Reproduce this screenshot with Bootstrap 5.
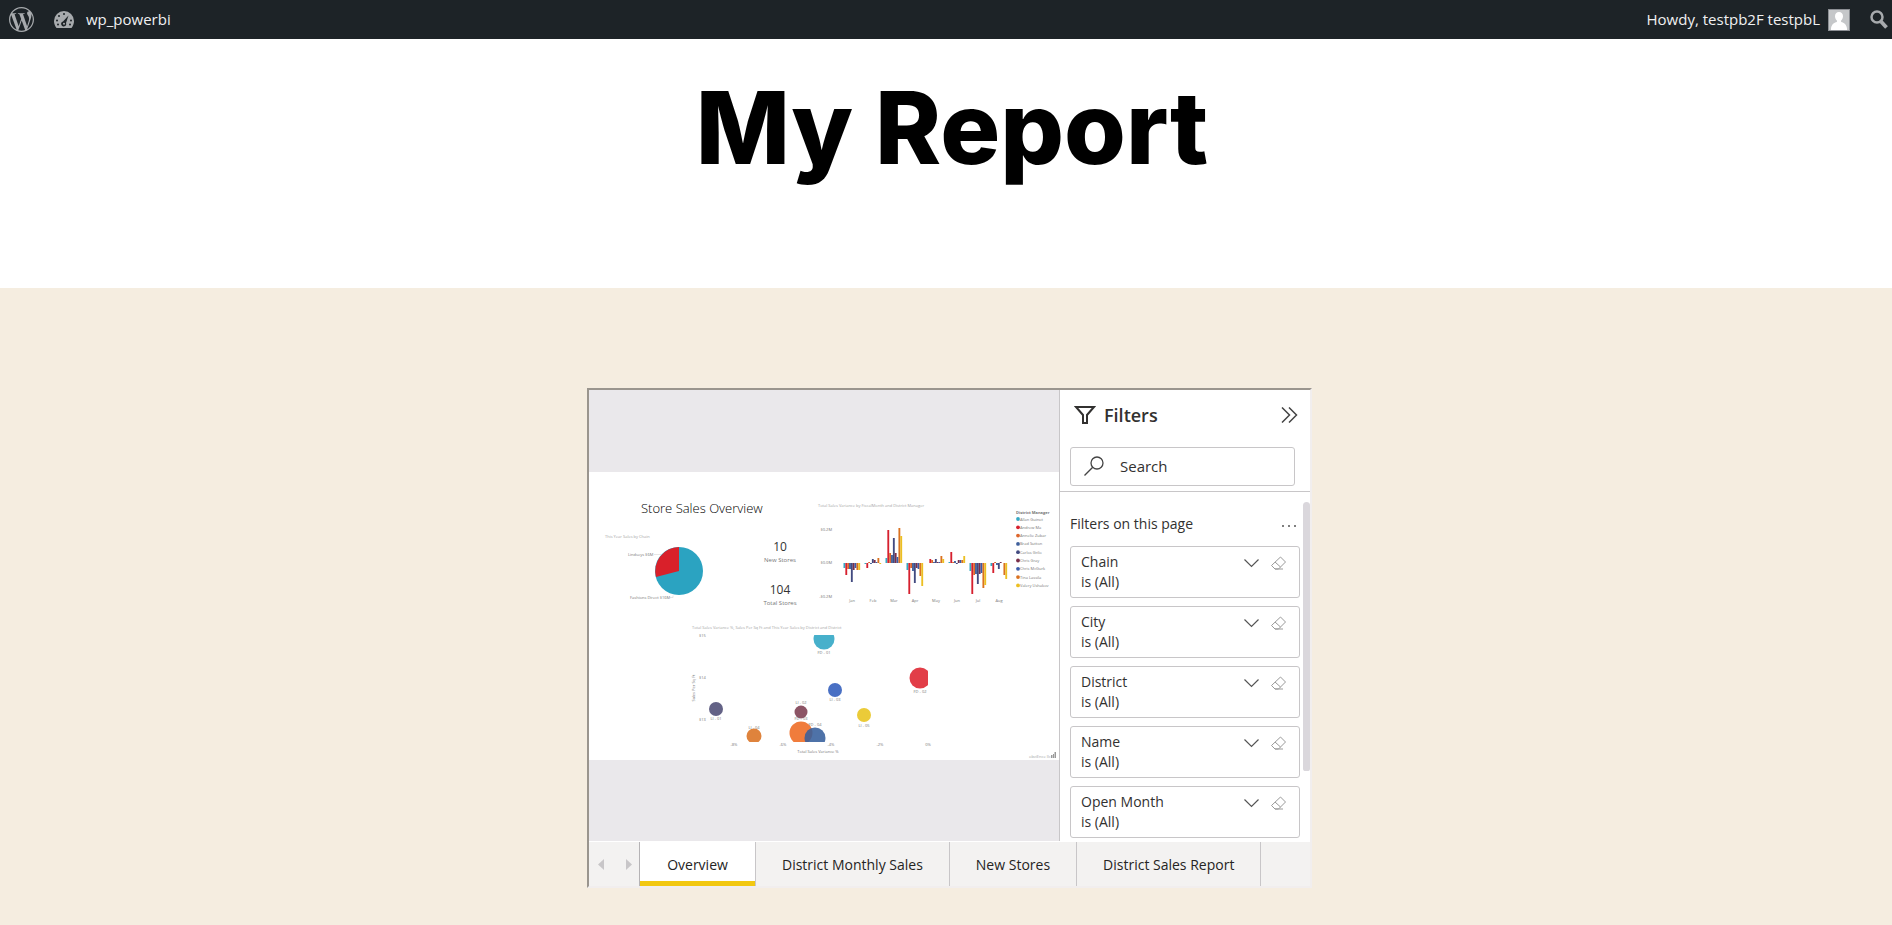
<!DOCTYPE html>
<html lang="en">
<head>
<meta charset="utf-8">
<meta name="viewport" content="width=device-width, initial-scale=1">
<title>My Report</title>
<link rel="stylesheet" href="https://cdn.jsdelivr.net/npm/bootstrap@5.3.0/dist/css/bootstrap.min.css">
<style>
  body { font-family: "Open Sans", "Liberation Sans", sans-serif; background: #f5ede0; }
  .admin-bar { background: #1d2327; height: 39px; font-size: 15px; padding: 0 4px 0 9px; }
  .admin-bar a { color: #f0f0f1; text-decoration: none; }
  .admin-bar svg { fill: #a7aaad; display: block; }
  .search-toggle { margin-left: 20px; }
  .admin-bar .avatar { border: 1px solid #8c8f94; background: #c5c7c9; }
  .page-head { background: #fff; padding: 28px 0 100px 12px; }
  .page-head h1 { font: 800 100px/121px Inter, "Liberation Sans", sans-serif; color: #000; margin: 0; }
  .page-main { background: #f5ede0; padding: 100px 0 24px 7px; }
  .report-frame { width: 100%; max-width: 725px; border: 2px solid; border-color: #9a958e #f1eeee #f1eeee #9a958e; background: #fff; }
  .report-body { height: 451px; }
  .canvas-area { background: #eae8eb; border-right: 1px solid #c8c6c8; }
  .canvas-area svg { background: #fff; width: 100%; display: block; }
  .filter-pane { width: 250px; color: #323130; font-size: 14px; }
  .pane-title { font-size: 18px; font-weight: 600; line-height: 24px; }
  .pane-head { padding: 13px 12px 0 14px; }
  .plain-btn { border: 0; background: none; padding: 0; color: inherit; display: block; }
  .pane-search { border: 1px solid #c8c6c8; border-radius: 3px; height: 39px; margin: 20px 15px 5px 10px; padding: 0 13px; }
  .pane-search input { border: 0; outline: 0; background: none; min-width: 0; font-size: 15px; color: #323130; padding: 0; }
  .pane-search input::placeholder { color: #323130; opacity: 1; }
  .pane-scroll { border-top: 1px solid #c8c6c8; padding: 21px 10px 0; min-height: 0; }
  .filter-card { border: 1px solid #c8c6c8; border-radius: 3px; height: 52px; line-height: 20px; padding: 5px 13px 0 10px; margin-bottom: 8px; }
  .scroll-thumb { position: absolute; top: 10px; right: 0; width: 7px; height: 269px; border-radius: 4px 4px 3px 3px; background: #dad7dc; }
  .page-tabs { background: #f3f2f1; height: 45px; border-top: 1px solid #fff; padding-left: 2px; }
  .tab-arrows { width: 48px; padding: 0 7px; }
  .tab-arrows svg { fill: #c8c6c8; display: block; }
  .page-tab { border: 0; border-right: 1px solid #c8c6c8; background: none; font-size: 14px; color: #252423; padding: 0 26px; white-space: nowrap; }
  .page-tab.active { background: #fff; border-left: 1px solid #b5b3b5; box-shadow: inset 0 -5px #f2c811; min-width: 117px; }
  .chart-s { font-size: 4px; fill: #777; }
  .chart-t { font-size: 4px; fill: #a5a5a5; }
  .chart-n { font-size: 12px; fill: #333; }
  .chart-l { font-size: 6px; fill: #777; }
</style>
</head>
<body>
<div class="d-flex flex-column min-vh-100">
  <nav class="admin-bar d-flex align-items-center" aria-label="Toolbar">
    <a href="#" aria-label="About WordPress"><svg width="25" height="25" viewBox="0 0 24 24"><path d="M21.469 6.825c.84 1.537 1.318 3.3 1.318 5.175 0 3.979-2.156 7.456-5.363 9.325l3.295-9.527c.615-1.54.82-2.771.82-3.864 0-.405-.026-.78-.07-1.11m-7.981.105c.647-.03 1.232-.105 1.232-.105.582-.075.514-.93-.067-.899 0 0-1.755.135-2.88.135-1.064 0-2.85-.15-2.85-.15-.585-.03-.661.855-.075.885 0 0 .54.061 1.125.09l1.68 4.605-2.37 7.08L5.354 6.9c.649-.03 1.234-.1 1.234-.1.585-.075.516-.93-.065-.896 0 0-1.746.138-2.874.138-.2 0-.438-.008-.69-.015C4.911 3.15 8.235 1.215 12 1.215c2.809 0 5.365 1.072 7.286 2.833-.046-.003-.091-.009-.141-.009-1.06 0-1.812.923-1.812 1.914 0 .89.513 1.643 1.06 2.531.411.72.89 1.643.89 2.977 0 .915-.354 1.994-.821 3.479l-1.075 3.585-3.9-11.61.001.014zM12 22.784c-1.059 0-2.081-.153-3.048-.437l3.237-9.406 3.315 9.087c.024.053.05.101.078.149-1.12.393-2.325.609-3.582.609M1.211 12c0-1.564.336-3.05.935-4.39L7.29 21.709C3.694 19.96 1.212 16.271 1.211 12M12 0C5.385 0 0 5.385 0 12s5.385 12 12 12 12-5.385 12-12S18.615 0 12 0"/></svg></a>
    <a href="#" class="d-flex align-items-center ms-3 ps-1">
      <svg width="20" height="18" viewBox="0 0 20 18"><path fill-rule="evenodd" d="M10 0a10 10 0 0 1 10 10c0 2.600-1 5-2.500 7h-15C1 15 0 12.600 0 10A10 10 0 0 1 10 0z"/><g fill="#1d2327"><circle cx="10" cy="3" r="1"/><circle cx="5" cy="5" r="1"/><circle cx="3" cy="9.500" r="1"/><circle cx="4" cy="13.500" r="1"/><circle cx="17" cy="9.500" r="1"/><circle cx="16" cy="13.500" r="1"/><path d="M14.500 4.500l-2.500 7.500a2.500 2.500 0 1 1-3-1.500z"/></g><circle cx="10" cy="12.800" r="1"/></svg>
      <span class="ms-2 ps-1">wp_powerbi</span>
    </a>
    <a href="#" class="d-flex align-items-center ms-auto">
      <span class="me-2">Howdy, testpb2F testpbL</span>
      <svg class="avatar" width="22" height="22" viewBox="0 0 20 20"><path fill="#fff" d="M10 2c2.500 0 4 1.800 4 4.200 0 1.800-.9 3.300-1.900 4.300v1.500c3 .7 5.400 2.500 5.900 6.500v1.500H2v-1.500c.5-4 2.900-5.800 5.900-6.500v-1.500C6.900 9.500 6 8 6 6.200 6 3.800 7.500 2 10 2z"/></svg>
    </a>
    <button class="plain-btn search-toggle" aria-label="Search site"><svg width="18" height="19" viewBox="0 0 18 19"><g fill="none" stroke="#a7aaad"><circle cx="7" cy="7" r="5.500" stroke-width="2.500"/><path d="M11 11.500l5.500 6" stroke-width="3.800"/></g></svg></button>
  </nav>

  <header class="page-head text-center"><h1>My Report</h1></header>

  <main class="page-main flex-grow-1">
    <section class="report-frame mx-auto" aria-label="Report">
      <div class="report-body d-flex">
        <div class="canvas-area flex-fill d-flex align-items-center">
          <svg viewBox="0 0 470 288" role="img" aria-label="Store Sales Overview">
            <text x="52" y="41" font-size="13" font-weight="300" fill="#000">Store Sales Overview</text>
            <text class="chart-t" x="16" y="66">This Year Sales by Chain</text>
            <circle cx="90" cy="99" r="24" fill="#2ba3c1"/><path d="M90 99V75A24 24 0 0 0 67 105z" fill="#d9202a"/>
            <text class="chart-s" x="39" y="84">Lindseys $6M</text><text class="chart-s" x="41" y="127">Fashions Direct $16M</text>
            <path d="M65 82.500h7M81 125.500h3v-2" fill="none" stroke="#ccc" stroke-width=".5"/>
            <g text-anchor="middle">
              <text class="chart-n" x="191" y="79">10</text><text class="chart-l" x="191" y="90">New Stores</text>
              <text class="chart-n" x="191" y="122">104</text><text class="chart-l" x="191" y="133">Total Stores</text>
            </g>
            <text class="chart-t" x="229" y="35">Total Sales Variance by FiscalMonth and District Manager</text>
            <g class="chart-s" text-anchor="end"><text x="243" y="59">$0.2M</text><text x="243" y="92">$0.0M</text><text x="243" y="126">-$0.2M</text></g>
            <g id="bars"></g>
            <text class="chart-s" x="427" y="42" font-weight="700">District Manager</text>
            <g id="legend"></g>
            <text class="chart-t" x="103" y="157">Total Sales Variance %, Sales Per Sq Ft and This Year Sales by District and District</text>
            <g class="chart-s"><text x="110" y="165">$15</text><text x="110" y="207">$14</text><text x="110" y="249">$13</text></g>
            <text class="chart-s" text-anchor="middle" transform="translate(106 216) rotate(-90)">Sales Per Sq Ft</text>
            <clipPath id="plot"><path d="M115 163h224v107H115z"/></clipPath>
            <g clip-path="url(#plot)">
              <circle cx="235" cy="167" r="10.500" fill="#47b0cb"/><circle cx="331" cy="206" r="10.500" fill="#e23e48"/>
              <circle cx="246" cy="218" r="7" fill="#4970c4"/><circle cx="127" cy="237" r="7" fill="#636286"/>
              <circle cx="212" cy="240" r="6.500" fill="#8c5465"/><circle cx="275" cy="243" r="7" fill="#ebcb38"/>
              <circle cx="165" cy="264" r="7.500" fill="#df833c"/><circle cx="212" cy="261" r="11.500" fill="#f07c3c"/>
              <circle cx="226" cy="266" r="10.500" fill="#355f9c" fill-opacity=".88"/>
            </g>
            <g class="chart-s" text-anchor="middle">
              <text x="235" y="182">FD - 01</text><text x="331" y="221">FD - 02</text><text x="246" y="229">LI - 03</text>
              <text x="127" y="248">LI - 01</text><text x="212" y="232">LI - 02</text><text x="212" y="248">FD - 03</text>
              <text x="226" y="254">FD - 04</text><text x="165" y="257">LI - 04</text><text x="275" y="255">LI - 05</text>
              <text x="145" y="274">-8%</text><text x="194" y="274">-6%</text><text x="242" y="274">-4%</text><text x="291" y="274">-2%</text><text x="339" y="274">0%</text>
              <text x="229" y="281">Total Sales Variance %</text>
            </g>
            <text class="chart-t" x="440" y="286">obviEnce llc</text>
            <path d="M462 286v-3h1.500v3zM464 286v-4h1v4zM465.500 286v-6h1.500v6z" fill="#999"/>
          </svg>
        </div>
        <aside class="filter-pane flex-shrink-0 d-flex flex-column" aria-label="Filters">
          <div class="pane-head d-flex align-items-center">
            <svg width="22" height="20" viewBox="0 0 22 20" fill="none" stroke="#323130" stroke-width="2"><path d="M2 2h18l-7 8v8H9v-8z"/></svg>
            <span class="pane-title ms-2">Filters</span>
            <button class="plain-btn ms-auto" aria-label="Collapse filters"><svg class="d-block" width="17" height="16" viewBox="0 0 17 16" fill="none" stroke="#444" stroke-width="1.500"><path d="M1 .5L8.500 8 1 15.500M8 .5L15.500 8 8 15.500"/></svg></button>
          </div>
          <label class="pane-search d-flex align-items-center">
            <svg class="flex-shrink-0" width="20" height="20" viewBox="0 0 20 20" fill="none" stroke="#444" stroke-width="1.300"><circle cx="13" cy="7" r="6"/><path d="M8.700 11.300L.5 19.500"/></svg>
            <input class="flex-fill ms-3" type="text" placeholder="Search" aria-label="Search">
          </label>
          <div class="pane-scroll flex-fill position-relative overflow-hidden">
            <div class="d-flex justify-content-between align-items-center mb-2 pb-1 pe-1">
              <span>Filters on this page</span>
              <button class="plain-btn" aria-label="More options"><svg class="d-block" width="14" height="12" viewBox="0 0 14 12" fill="#555"><circle cx="1" cy="9" r="1"/><circle cx="7" cy="9" r="1"/><circle cx="13" cy="9" r="1"/></svg></button>
            </div>
            <div id="filters"></div>
            <div class="scroll-thumb"></div>
          </div>
        </aside>
      </div>
      <div class="page-tabs d-flex">
        <div class="tab-arrows d-flex align-items-center justify-content-between">
          <button class="plain-btn" aria-label="Previous page"><svg width="6" height="11" viewBox="0 0 6 11"><path d="M6 0v11L0 5.500z"/></svg></button>
          <button class="plain-btn" aria-label="Next page"><svg width="6" height="11" viewBox="0 0 6 11"><path d="M0 0v11l6-5.500z"/></svg></button>
        </div>
        <button class="page-tab active">Overview</button>
        <button class="page-tab">District Monthly Sales</button>
        <button class="page-tab">New Stores</button>
        <button class="page-tab">District Sales Report</button>
      </div>
    </section>
  </main>
</div>
<script src="https://cdn.jsdelivr.net/npm/bootstrap@5.3.0/dist/js/bootstrap.bundle.min.js"></script>
<script>
  const managers = [['Allan Guinot', '#35a8c4'], ['Andrew Ma', '#d6202e'], ['Annelie Zubar', '#dd662c'],
    ['Brad Sutton', '#3f5f9c'], ['Carlos Grilo', '#424a80'], ['Chris Gray', '#7a2f49'],
    ['Chris McGurk', '#3a5baa'], ['Tina Lassila', '#da7120'], ['Valery Ushakov', '#ecbf22']];
  const months = {
    Jan: [-5, -12, -6, -6, -19, -7, -5, -7, -7],
    Feb: [-1, -5, 1, -1, 4, 3, 1, 5, -1],
    Mar: [5, 33, 10, 8, 25, 10, 6, 35, 27],
    Apr: [-7, -31, -5, -8, -20, -5, -6, -13, -23],
    May: [0, 4, 3, 1, 4, 1, 1, 7, 4],
    Jun: [1, 11, 1, 2, -1, 3, 3, 3, 7],
    Jul: [-8, -31, -12, -11, -21, -11, -10, -25, -22],
    Aug: [-3, -10, 1, -2, -6, 1, 0, -12, -16]
  };
  // One cluster of nine bars for each month, drawn up or down from the zero line.
  document.getElementById('bars').innerHTML = Object.entries(months).map(([name, values], m) =>
    values.map((v, i) => `<rect x="${254.5 + m * 21 + i * 1.85}" y="${91 - Math.max(v, 0)}" width="1.85" height="${Math.abs(v)}" fill="${managers[i][1]}"/>`).join('') +
    `<text class="chart-s" text-anchor="middle" x="${263 + m * 21}" y="130">${name}</text>`).join('');
  document.getElementById('legend').innerHTML = managers.map(([name, colour], i) =>
    `<circle cx="429" cy="${47 + i * 8.3}" r="1.9" fill="${colour}"/><text class="chart-s" x="431" y="${48.5 + i * 8.3}">${name}</text>`).join('');
  document.getElementById('filters').innerHTML = ['Chain', 'City', 'District', 'Name', 'Open Month'].map(name => `
    <div class="filter-card d-flex align-items-start">
      <div class="me-auto"><div>${name}</div><div>is (All)</div></div>
      <button class="plain-btn mt-1" aria-label="Expand ${name}"><svg class="d-block" width="15" height="14" viewBox="0 0 15 14" fill="none" stroke="#555" stroke-width="1.200"><path d="M.5 3.500l7 7 7-7"/></svg></button>
      <button class="plain-btn mt-1 ms-2 ps-1" aria-label="Clear ${name}"><svg class="d-block" width="15" height="14" viewBox="0 0 15 14" fill="none" stroke="#999"><path d="M9.500 1l5 5-7 7H4L.5 9.500zM4 6l5.500 5M4 13h8"/></svg></button>
    </div>`).join('');
</script>
</body>
</html>
